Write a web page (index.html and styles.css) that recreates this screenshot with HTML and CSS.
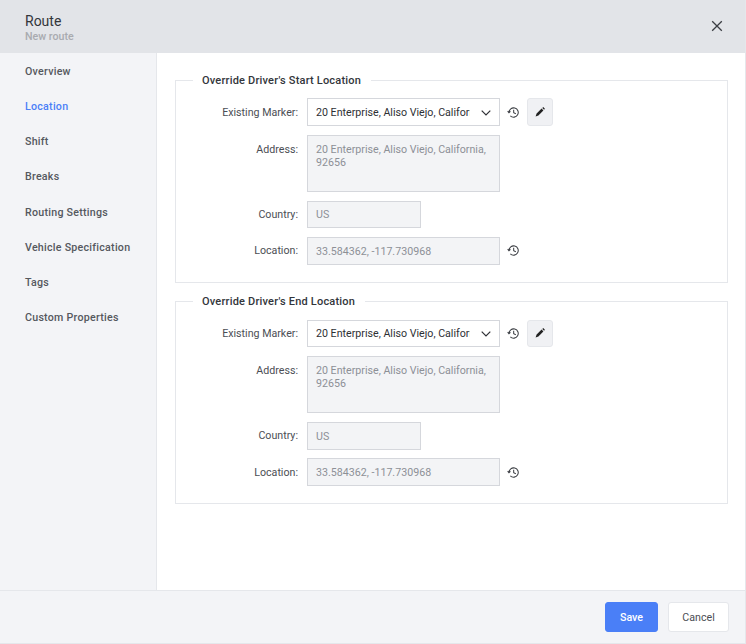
FILE: index.html
```html
<!DOCTYPE html>
<html lang="en">
<head>
  <meta charset="UTF-8" />
  <meta name="viewport" content="width=device-width, initial-scale=1.0"/>
  <title>Route</title>
  <link rel="stylesheet" href="styles.css">
</head>
<body>
  <div class="dialog">
    <header class="dialog-header">
      <div class="dialog-heading">
        <div class="dialog-title">Route</div>
        <div class="dialog-subtitle">New route</div>
      </div>
      <button class="close-btn" aria-label="Close">
        <svg width="12" height="12" viewBox="0 0 12 12"><path d="M1.2 1.2 10.8 10.8M10.8 1.2 1.2 10.8" stroke="#3a3d42" stroke-width="1.3" fill="none"/></svg>
      </button>
    </header>

    <div class="dialog-body">
      <nav class="sidebar">
        <a class="nav-item">Overview</a>
        <a class="nav-item active">Location</a>
        <a class="nav-item">Shift</a>
        <a class="nav-item">Breaks</a>
        <a class="nav-item">Routing Settings</a>
        <a class="nav-item">Vehicle Specification</a>
        <a class="nav-item">Tags</a>
        <a class="nav-item">Custom Properties</a>
      </nav>

      <main class="content">
        <fieldset class="group">
          <legend>Override Driver's Start Location</legend>
          <div class="form-row">
            <label>Existing Marker:</label>
            <div class="select-box">
              <span class="select-text">20 Enterprise, Aliso Viejo, California, 92656</span>
              <svg class="chevron" width="10" height="6" viewBox="0 0 10 6"><path d="M.7.7 5 5 9.3.7" stroke="#2e3035" stroke-width="1.2" fill="none"/></svg>
            </div>
            <svg class="history" width="13" height="13" viewBox="0 0 14 14"><path d="M2.1 7a5 5 0 1 1 1.5 3.6M.7 5.6 2.1 7.2 3.7 5.7M7.2 4v3.3l2.3 1.1" stroke="#3a3d42" stroke-width="1.1" fill="none"/></svg>
            <button class="edit-btn" aria-label="Edit">
              <svg width="12" height="12" viewBox="0 0 12 12"><path d="M7.6 2.6 9.4 4.4 4.4 9.4 1.6 10.4l1-2.8zM8.3 1.9l.9-.8 1.7 1.7-.8.9z" fill="#222"/></svg>
            </button>
          </div>
          <div class="form-row top">
            <label>Address:</label>
            <div class="field area">20 Enterprise, Aliso Viejo, California, 92656</div>
          </div>
          <div class="form-row">
            <label>Country:</label>
            <div class="field short">US</div>
          </div>
          <div class="form-row">
            <label>Location:</label>
            <div class="field">33.584362, -117.730968</div>
            <svg class="history" width="13" height="13" viewBox="0 0 14 14"><path d="M2.1 7a5 5 0 1 1 1.5 3.6M.7 5.6 2.1 7.2 3.7 5.7M7.2 4v3.3l2.3 1.1" stroke="#3a3d42" stroke-width="1.1" fill="none"/></svg>
          </div>
        </fieldset>

        <fieldset class="group">
          <legend>Override Driver's End Location</legend>
          <div class="form-row">
            <label>Existing Marker:</label>
            <div class="select-box">
              <span class="select-text">20 Enterprise, Aliso Viejo, California, 92656</span>
              <svg class="chevron" width="10" height="6" viewBox="0 0 10 6"><path d="M.7.7 5 5 9.3.7" stroke="#2e3035" stroke-width="1.2" fill="none"/></svg>
            </div>
            <svg class="history" width="13" height="13" viewBox="0 0 14 14"><path d="M2.1 7a5 5 0 1 1 1.5 3.6M.7 5.6 2.1 7.2 3.7 5.7M7.2 4v3.3l2.3 1.1" stroke="#3a3d42" stroke-width="1.1" fill="none"/></svg>
            <button class="edit-btn" aria-label="Edit">
              <svg width="12" height="12" viewBox="0 0 12 12"><path d="M7.6 2.6 9.4 4.4 4.4 9.4 1.6 10.4l1-2.8zM8.3 1.9l.9-.8 1.7 1.7-.8.9z" fill="#222"/></svg>
            </button>
          </div>
          <div class="form-row top">
            <label>Address:</label>
            <div class="field area">20 Enterprise, Aliso Viejo, California, 92656</div>
          </div>
          <div class="form-row">
            <label>Country:</label>
            <div class="field short">US</div>
          </div>
          <div class="form-row">
            <label>Location:</label>
            <div class="field">33.584362, -117.730968</div>
            <svg class="history" width="13" height="13" viewBox="0 0 14 14"><path d="M2.1 7a5 5 0 1 1 1.5 3.6M.7 5.6 2.1 7.2 3.7 5.7M7.2 4v3.3l2.3 1.1" stroke="#3a3d42" stroke-width="1.1" fill="none"/></svg>
          </div>
        </fieldset>
      </main>
    </div>

    <footer class="dialog-footer">
      <button class="btn btn-primary">Save</button>
      <button class="btn">Cancel</button>
    </footer>
  </div>
</body>
</html>
```

FILE: styles.css
```css
* {
  box-sizing: border-box;
}
body {
  margin: 0;
  background-color: #e5e7eb;
  font-family: Roboto, Arial, sans-serif;
  font-size: 12px;
  color: #4b4e54;
}
.dialog {
  width: 745px;
  height: 643px;
  display: flex;
  flex-direction: column;
  background-color: white;
}
.dialog-header {
  height: 53px;
  flex: none;
  display: flex;
  align-items: center;
  justify-content: space-between;
  padding: 0 22px 0 25px;
  background-color: #e2e4e8;
}
.dialog-heading {
  padding-top: 2px;
}
.dialog-title {
  font-size: 14px;
  line-height: 17px;
  color: #33363b;
}
.dialog-subtitle {
  font-size: 10.67px;
  font-weight: 500;
  line-height: 13px;
  color: #a9abb0;
}
.close-btn {
  padding: 0;
  margin-top: -1px;
  border: none;
  background: none;
  display: flex;
}
.dialog-body {
  flex: 1;
  display: flex;
  min-height: 0;
}
.sidebar {
  width: 157px;
  flex: none;
  padding-top: 0.8px;
  background-color: #f3f4f7;
  border-right: 1px solid #e5e7eb;
}
.nav-item {
  display: block;
  height: 35.2px;
  padding: 11px 0 0 25px;
  font-size: 10.67px;
  line-height: 14px;
  font-weight: 500;
  letter-spacing: 0.25px;
  color: #55585e;
}
.nav-item.active {
  color: #4a7ff7;
}
.content {
  flex: 1;
  padding: 19px 17px 0 18px;
}
.group {
  margin: 0 0 10.1px;
  padding: 10.4px 0 0 0;
  height: 211.2px;
  border: 1px solid #e5e7eb;
}
.group legend {
  margin-left: 17px;
  padding: 2px 10px 0 9px;
  font-size: 11px;
  line-height: 14px;
  font-weight: 500;
  letter-spacing: 0.2px;
  color: #33363b;
}
.form-row {
  display: flex;
  align-items: center;
  margin-bottom: 8.7px;
}
.form-row.top {
  align-items: flex-start;
  margin-bottom: 9px;
}
.form-row label {
  width: 122px;
  margin-right: 9px;
  padding-top: 1px;
  text-align: right;
  font-size: 10.67px;
  line-height: 14px;
  color: #4b4e54;
}
.form-row.top label {
  padding-top: 8px;
}
.select-box,
.field {
  width: 193px;
  height: 27.6px;
  padding: 1px 8px 0;
  display: flex;
  align-items: center;
  font-size: 10.67px;
  border: 1px solid #d5d7dc;
}
.select-box {
  background-color: white;
  color: #2e3035;
}
.select-text {
  white-space: nowrap;
  overflow: hidden;
  width: 154px;
}
.chevron {
  margin-left: auto;
  flex: none;
}
.field {
  background-color: #f3f4f6;
  color: #8d9096;
}
.field.short {
  width: 114px;
}
.field.area {
  height: 57px;
  display: block;
  padding-top: 7.5px;
  line-height: 13px;
}
.history {
  margin-left: 7px;
  flex: none;
}
.edit-btn {
  width: 26px;
  height: 27.6px;
  margin-left: 7px;
  padding: 0;
  display: flex;
  align-items: center;
  justify-content: center;
  background-color: #f0f1f4;
  border: 1px solid #e5e7eb;
  border-radius: 3px;
}
.dialog-footer {
  height: 53px;
  flex: none;
  display: flex;
  justify-content: flex-end;
  align-items: center;
  gap: 10px;
  padding: 0 16px 0 0;
  background-color: #f3f4f7;
  border-top: 1px solid #e5e7eb;
}
.btn {
  width: 61px;
  height: 30px;
  padding: 0;
  font-family: inherit;
  font-size: 10.67px;
  color: #4b4e54;
  background-color: white;
  border: 1px solid #e5e7eb;
  border-radius: 3px;
}
.btn-primary {
  width: 53px;
  font-weight: 500;
  color: white;
  background-color: #4a7ff7;
  border-color: #4a7ff7;
}
```
